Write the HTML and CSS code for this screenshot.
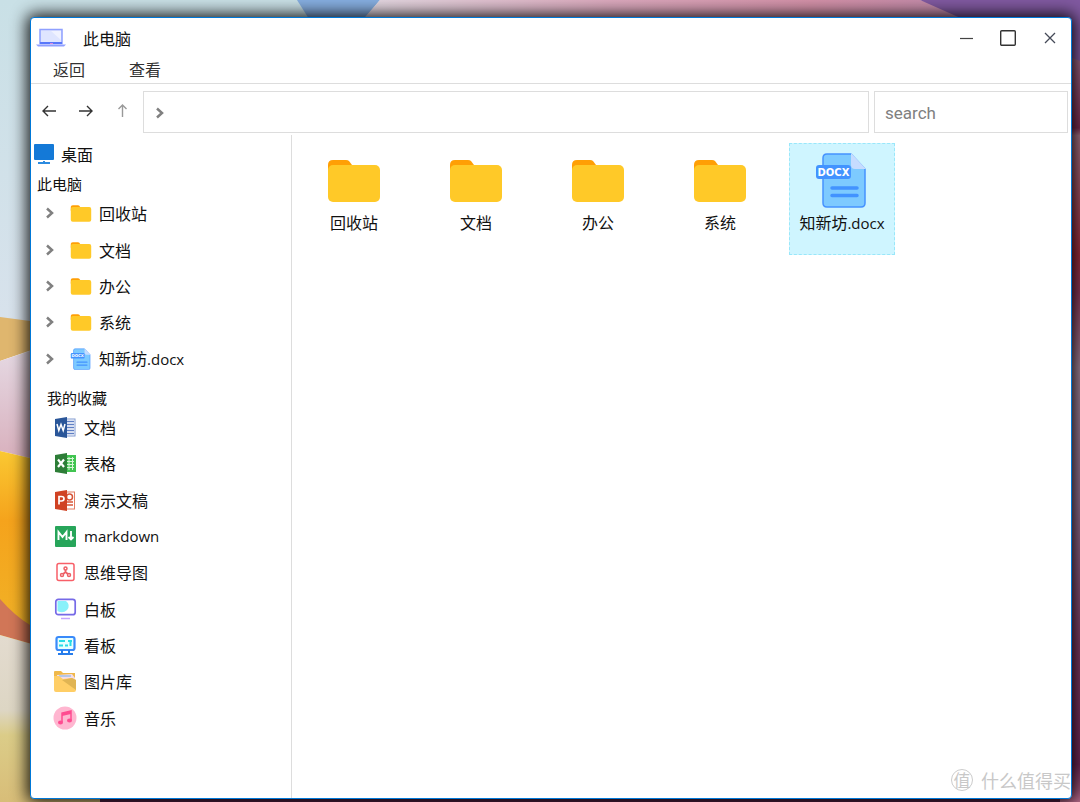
FILE: index.html
```html
<!DOCTYPE html>
<html lang="zh-CN">
<head>
<meta charset="utf-8">
<title>此电脑</title>
<link rel="stylesheet" href="styles.css">
</head>
<body>
<svg class="wallpaper" viewBox="0 0 1080 802" preserveAspectRatio="none" aria-hidden="true">
  <defs>
    <linearGradient id="sky" x1="0" y1="0" x2="0" y2="1"><stop offset="0" stop-color="#c9e0e6"/><stop offset="1" stop-color="#d8e2ec"/></linearGradient>
    <linearGradient id="rose" x1="0" y1="0" x2="0" y2="1"><stop offset="0" stop-color="#e6dce6"/><stop offset="1" stop-color="#d8aebb"/></linearGradient>
    <linearGradient id="sun" x1="0" y1="0" x2="0" y2="1"><stop offset="0" stop-color="#fac832"/><stop offset=".35" stop-color="#f5a31c"/><stop offset="1" stop-color="#f0b428"/></linearGradient>
    <linearGradient id="sand" x1="0" y1="0" x2="0" y2="1"><stop offset="0" stop-color="#e3dbcf"/><stop offset=".45" stop-color="#ddd6c4"/><stop offset=".6" stop-color="#dbcc88"/><stop offset="1" stop-color="#d8bd78"/></linearGradient>
    <linearGradient id="band"><stop offset="0" stop-color="#e4dce4"/><stop offset=".4" stop-color="#dba9bd"/><stop offset=".7" stop-color="#d391a8"/><stop offset="1" stop-color="#bb88aa"/></linearGradient>
    <linearGradient id="edge" x1="0" y1="0" x2="0" y2="1"><stop offset="0" stop-color="#9c6a88"/><stop offset=".1" stop-color="#7a2b50"/><stop offset=".11" stop-color="#a47284"/><stop offset=".27" stop-color="#9c2c3c"/><stop offset=".32" stop-color="#8b385a"/><stop offset=".42" stop-color="#a08498"/><stop offset=".6" stop-color="#907090"/><stop offset=".8" stop-color="#7e3b64"/><stop offset=".95" stop-color="#702858"/><stop offset="1" stop-color="#b86c8c"/></linearGradient>
  </defs>
  <rect width="310" height="330" fill="url(#sky)"/>
  <path d="M0 317L60 325V340L0 361Z" fill="#dfb66e"/>
  <path d="M0 361L60 341V465L0 451Z" fill="url(#rose)"/>
  <path d="M0 451L60 465V650L0 640Z" fill="url(#sun)"/>
  <path d="M0 599Q15 616 30 625L60 640V652L0 635Z" fill="#d17657"/>
  <path d="M0 635L60 652V770H1080V802H0Z" fill="url(#sand)"/>
  <path d="M100 790H1080V802H100Z" fill="#562448"/>
  <path d="M297 0H380L355 30H316Z" fill="#86aee0"/>
  <path d="M380 0H920L1010 26V40H345Z" fill="url(#band)"/>
  <path d="M920 0H1080V62L1060 54V40H1010Z" fill="#8059a0"/>
  <path d="M1060 53L1080 61V802H1060Z" fill="url(#edge)"/>
</svg>

<svg class="symbols" aria-hidden="true">
  <symbol id="folder" viewBox="0 0 56 56"><path d="M2 13Q2 8 7 8H20Q22 8 23 9L26 13V22H2Z" fill="#ff9f05"/><rect x="2" y="13" width="52" height="37" rx="5" fill="#ffc928"/></symbol>
  <symbol id="docx" viewBox="0 0 56 56"><path d="M13 2H37L51 17V51Q51 55 47 55H13Q9 55 9 51V6Q9 2 13 2Z" fill="#7dcaff" stroke="#4592ff" stroke-width="1.5"/><path d="M37 1V13Q37 17 41 17H52Z" fill="#c6dcff"/><rect x="2" y="13" width="35" height="14" rx="3" fill="#4293ff"/><path d="M18 36H43M18 43.500H43" stroke="#4293ff" stroke-width="3.500" stroke-linecap="round"/><text class="docx-badge" x="19.500" y="24" text-anchor="middle">DOCX</text></symbol>
  <symbol id="chevron" viewBox="0 0 10 12"><path d="M2 1.500L7 6L2 10.500" fill="none" stroke="#808080" stroke-width="2.500"/></symbol>
</svg>

<main class="window">
  <header class="titlebar">
    <svg class="laptop" viewBox="0 0 30 20"><rect x="4" y="1.500" width="22" height="14" fill="#dfe5ff" stroke="#8fa0ff" stroke-width="1.500"/><path d="M15 3H25V12Z" fill="#f0f2ff"/><path d="M0 16.500H30L28 18.500H2Z" fill="#8f9fff"/><path d="M4 15H26" stroke="#5878fa" stroke-width="2"/><path d="M14 15.500H17" stroke="#dc8adf"/></svg>
    <h1 class="title">此电脑</h1>
    <div class="controls">
      <button class="control" aria-label="最小化"><svg viewBox="0 0 18 18"><path d="M3 9.500H16" stroke="#444" stroke-width="1.200"/></svg></button>
      <button class="control" aria-label="最大化"><svg viewBox="0 0 18 18"><rect x="1.700" y="1.700" width="14.600" height="14.600" rx="1" fill="none" stroke="#333" stroke-width="1.400"/></svg></button>
      <button class="control" aria-label="关闭"><svg viewBox="0 0 18 18"><path d="M4 4L14 14M14 4L4 14" stroke="#454a58" stroke-width="1.300"/></svg></button>
    </div>
  </header>
  <nav class="menu"><button>返回</button><button>查看</button></nav>
  <div class="toolbar">
    <div class="history">
      <button aria-label="后退"><svg viewBox="0 0 16 16"><path d="M15 8H2M7 3L2 8L7 13" fill="none" stroke="#333" stroke-width="1.400"/></svg></button>
      <button aria-label="前进"><svg viewBox="0 0 16 16"><path d="M1 8H14M9 3L14 8L9 13" fill="none" stroke="#333" stroke-width="1.400"/></svg></button>
      <button aria-label="上一级"><svg viewBox="0 0 16 16"><path d="M7.500 14V2M3.500 6L7.500 2L11.500 6" fill="none" stroke="#999" stroke-width="1.400"/></svg></button>
    </div>
    <div class="address"><svg class="chevron"><use href="#chevron"/></svg><input aria-label="地址"></div>
    <input class="search" type="text" placeholder="search" aria-label="search">
  </div>
  <div class="body">
    <aside class="sidebar">
      <a class="desktop" href="#"><svg viewBox="0 0 20 20"><rect width="20" height="16" rx="1" fill="#1479d7"/><path d="M9 17H11V18H16V20H4V18H9Z" fill="#2c8be0"/></svg>桌面</a>
      <h2 class="heading">此电脑</h2>
      <ul class="tree">
        <li><a href="#"><svg class="chevron"><use href="#chevron"/></svg><svg class="icon"><use href="#folder"/></svg>回收站</a></li>
        <li><a href="#"><svg class="chevron"><use href="#chevron"/></svg><svg class="icon"><use href="#folder"/></svg>文档</a></li>
        <li><a href="#"><svg class="chevron"><use href="#chevron"/></svg><svg class="icon"><use href="#folder"/></svg>办公</a></li>
        <li><a href="#"><svg class="chevron"><use href="#chevron"/></svg><svg class="icon"><use href="#folder"/></svg>系统</a></li>
        <li><a href="#"><svg class="chevron"><use href="#chevron"/></svg><svg class="icon"><use href="#docx"/></svg><span>知新坊<span class="latin">.docx</span></span></a></li>
      </ul>
      <h2 class="heading favorites-heading">我的收藏</h2>
      <ul class="favorites">
        <li><a href="#"><svg class="icon" viewBox="0 0 22 22"><rect x="11" y="3" width="10" height="17" fill="#fff" stroke="#8099cf"/><path d="M12 5.500H20M12 8.500H20M12 11.500H20M12 14.500H20M12 17.500H20" stroke="#5f7fc4" stroke-width="1.300"/><path d="M1 3L13 1V22L1 20Z" fill="#2a5699"/><path d="M3 8L4.800 14.500L7 8.500L9.200 14.500L11 8" fill="none" stroke="#fff" stroke-width="1.500"/></svg>文档</a></li>
        <li><a href="#"><svg class="icon" viewBox="0 0 22 22"><rect x="11" y="3" width="11" height="17" fill="#41c451"/><path d="M15 5V18M18.500 5V18M13 6.500H20M13 9.500H20M13 12.500H20M13 15.500H20" stroke="#d7f5d6"/><path d="M1 3L13 1V22L1 20Z" fill="#2d7d37"/><path d="M4 7.500L10 15M10 7.500L4 15" stroke="#fff" stroke-width="2.200"/></svg>表格</a></li>
        <li><a href="#"><svg class="icon" viewBox="0 0 22 22"><rect x="11" y="3" width="9.500" height="17" fill="#fff" stroke="#e27c63"/><circle cx="15.500" cy="8" r="3" fill="#fff" stroke="#d75539" stroke-width="1.500"/><path d="M13 13H19M13 16H19" stroke="#d75539" stroke-width="1.300"/><path d="M1 3L13 1V22L1 20Z" fill="#d04223"/><path d="M5 15.500V7.500H7.500Q10 7.500 10 9.800Q10 12 7.500 12H5" fill="none" stroke="#fff" stroke-width="1.700"/></svg>演示文稿</a></li>
        <li><a href="#"><svg class="icon" viewBox="0 0 22 22"><rect x="1" y="1" width="21" height="21" rx="1" fill="#27a55a"/><path d="M4.500 15V7L8.500 12L12.500 7V15M17 6V14M14.500 12L17 14.500L19.500 12" fill="none" stroke="#fff" stroke-width="1.900"/></svg><span class="latin">markdown</span></a></li>
        <li><a href="#"><svg class="icon" viewBox="0 0 22 22"><rect x="3" y="2.500" width="17" height="17" rx="2" fill="#fff" stroke="#f85f68" stroke-width="1.500"/><path d="M11.500 8V11L8 14M11.500 11L15 14" fill="none" stroke="#ed6067" stroke-width="1.700"/><g fill="#fff" stroke="#ed6067" stroke-width="1.500"><circle cx="11.500" cy="7.500" r="1.500"/><circle cx="8" cy="14" r="1.500"/><circle cx="15" cy="14" r="1.500"/></g></svg>思维导图</a></li>
        <li><a href="#"><svg class="icon" viewBox="0 0 22 22"><rect x="1.800" y="1.300" width="19.400" height="15.400" rx="2.500" fill="#fff" stroke="#766ae7" stroke-width="1.700"/><path d="M3.500 3H12Q17 7 13 12Q9 16 3.500 13Z" fill="#8af1fa"/><path d="M7 20.500H16" stroke="#c5a5ff" stroke-width="1.500"/></svg>白板</a></li>
        <li><a href="#"><svg class="icon" viewBox="0 0 22 22"><rect x="2.500" y="3" width="18" height="13" rx="2" fill="#e6ffff" stroke="#398afa" stroke-width="2.200"/><path d="M5 7H11M14 7H18M5 11.500H9M11 11.500H14M16.500 8V12" stroke="#28dce7" stroke-width="2"/><path d="M8 16V20M15 16V20M4 20H19" stroke="#267ceb" stroke-width="2"/></svg>看板</a></li>
        <li><a href="#"><svg class="icon" viewBox="0 0 22 22"><path d="M0 2Q0 1 1 1H7L9 3H21V10H0Z" fill="#efb84a"/><path d="M3 5L18 4L21 8V12H3Z" fill="#f4dce8"/><path d="M5 6H17" stroke="#76b2e8"/><path d="M0 6H5L9 9L18 8L22 10V20Q22 22 20 22H2Q0 22 0 20Z" fill="#ffce66"/><path d="M8 10L22 20V10L18 8Z" fill="#e0b453"/></svg>图片库</a></li>
        <li><a href="#"><svg class="icon" viewBox="0 0 22 22"><circle cx="11" cy="11" r="11.500" fill="#ffb6d0"/><path d="M8 15V6L17 4V13" fill="none" stroke="#ff4c91" stroke-width="1.500"/><path d="M8 6L17 4V7L8 9Z" fill="#ff4c91"/><ellipse cx="6.500" cy="15.500" rx="2.500" ry="2" fill="#ff4c91"/><ellipse cx="15.500" cy="13.500" rx="2.500" ry="2" fill="#ff4c91"/></svg>音乐</a></li>
      </ul>
    </aside>
    <section class="files" aria-label="文件">
      <button class="tile"><svg><use href="#folder"/></svg><span>回收站</span></button>
      <button class="tile"><svg><use href="#folder"/></svg><span>文档</span></button>
      <button class="tile"><svg><use href="#folder"/></svg><span>办公</span></button>
      <button class="tile"><svg><use href="#folder"/></svg><span>系统</span></button>
      <button class="tile selected"><svg><use href="#docx"/></svg><span>知新坊<span class="latin">.docx</span></span></button>
    </section>
  </div>
</main>
<div class="watermark"><span class="seal">值</span>什么值得买</div>
</body>
</html>
```
FILE: styles.css
```css
* { box-sizing: border-box; }

body {
  margin: 0;
  min-height: 100vh;
  padding: 17px 8px 3px 30px;
  display: flex;
  overflow: hidden;
  font: 16px/24px "Noto Sans CJK SC", sans-serif;
  color: #111;
}

button, input { font: inherit; color: inherit; border: 0; padding: 0; background: none; }
a { color: inherit; text-decoration: none; }
h1, h2, ul { margin: 0; padding: 0; font-weight: 400; list-style: none; }
svg { display: block; flex: none; overflow: visible; }

.wallpaper { position: absolute; inset: 0; width: 100%; height: 100%; z-index: -1; overflow: hidden; }
.symbols { position: absolute; width: 0; height: 0; }
.latin { font-family: "Open Sans", sans-serif; font-size: 15px; }
.docx-badge { font: bold 10px "DejaVu Sans", sans-serif; fill: #fff; }

.window {
  flex: 1;
  min-width: 0;
  display: flex;
  flex-direction: column;
  background: #fff;
  border: 1px solid #0078d7;
  border-radius: 4px;
  box-shadow: 0 0 16px 3px rgba(0, 0, 0, 0.9);
}

.titlebar { display: flex; align-items: center; height: 39px; padding: 0 12px 0 5px; }
.laptop { width: 30px; height: 20px; }
.title { margin-left: 17px; font-size: 16px; line-height: 24px; }
.controls { display: flex; gap: 24px; margin-left: auto; }
.control svg { width: 18px; height: 18px; }

.menu { display: flex; gap: 44px; height: 27px; padding-left: 22px; border-bottom: 1px solid #ddd; color: #333; }
.menu button { height: 24px; }

.toolbar { display: flex; gap: 5px; padding: 7px 3px 2px 10px; }
.history { display: flex; align-items: center; gap: 21px; width: 97px; padding-bottom: 3px; }
.history svg { width: 16px; height: 16px; }
.address { flex: 1; display: flex; align-items: center; height: 42px; border: 1px solid #ddd; padding: 2px 0 0 11px; }
.address input { flex: 1; min-width: 0; height: 100%; padding-left: 12px; }
.chevron { width: 10px; height: 12px; }
.search { width: 194px; height: 42px; padding: 2px 10px 0; border: 1px solid #ddd; font-family: Roboto, sans-serif; font-size: 17px; }
.search::placeholder { color: #808080; opacity: 1; }

.body { flex: 1; display: flex; }
.sidebar { width: 261px; border-right: 1px solid #ddd; }
.desktop { display: flex; align-items: center; gap: 7px; height: 38px; padding-left: 3px; }
.desktop svg { width: 20px; height: 20px; }
.heading { padding-left: 6px; font-size: 15px; line-height: 22px; }
.favorites-heading { padding: 10px 0 0 16px; }
.tree, .favorites { display: grid; grid-auto-rows: 1fr; }
.tree { min-height: 182px; }
.favorites { min-height: 327px; }
.tree a, .favorites a { display: flex; align-items: center; height: 100%; }
.tree a { padding-left: 14px; }
.tree .icon { margin: 0 7px 0 15px; }
.favorites a { gap: 8px; padding-left: 23px; }
.icon { width: 22px; height: 22px; }

.files { flex: 1; display: flex; flex-wrap: wrap; align-content: flex-start; gap: 16px; padding: 8px 9px; }
.tile { display: flex; flex-direction: column; align-items: center; gap: 2px; width: 106px; height: 112px; padding-top: 8px; border: 1px dashed transparent; }
.tile svg { width: 56px; height: 56px; }
.tile.selected { background: #cff5ff; border-color: #99e7fa; }

.watermark { position: absolute; right: 9px; bottom: 10px; display: flex; align-items: center; gap: 8px; font-size: 18px; color: #c8c8c8; }
.seal { width: 22px; height: 22px; border: 1px solid #ccc; border-radius: 50%; font-size: 17px; line-height: 19px; text-align: center; }
```
